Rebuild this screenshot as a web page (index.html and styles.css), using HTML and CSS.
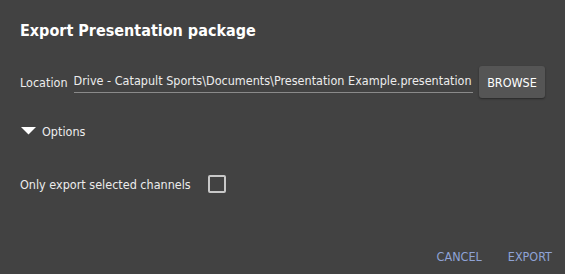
FILE: index.html
```html
<!DOCTYPE html>
<html lang="en">

<head>
    <meta charset="UTF-8">
    <meta name="viewport" content="width=device-width, initial-scale=1.0">
    <title>Export Presentation package</title>
    <link rel="stylesheet" href="styles.css">
</head>

<body>
    <div class="dialog">
        <h2 class="title">Export Presentation package</h2>

        <div class="location-row">
            <label class="field-label">Location</label>
            <div class="path-field">Drive - Catapult Sports\Documents\Presentation Example.presentation</div>
            <button class="browse-btn">BROWSE</button>
        </div>

        <div class="options-toggle">
            <svg class="caret" width="15" height="8" viewBox="0 0 15 8">
                <polygon points="0,0 15,0 7.5,7.5" fill="#ffffff" />
            </svg>
            <span>Options</span>
        </div>

        <div class="check-row">
            <span>Only export selected channels</span>
            <span class="checkbox"></span>
        </div>

        <div class="actions">
            <button class="text-btn">CANCEL</button>
            <button class="text-btn">EXPORT</button>
        </div>
    </div>
</body>

</html>
```

FILE: styles.css
```css
body {
    margin: 0;
    padding: 0;
    background-color: #424242;
    font-family: "DejaVu Sans Condensed", "DejaVu Sans", sans-serif;
    color: #ececec;
}

.dialog {
    width: 565px;
    height: 274px;
    box-sizing: border-box;
    padding: 20px 20px 0 20px;
    display: flex;
    flex-direction: column;
}

.title {
    margin: 0;
    font-size: 16px;
    font-weight: bold;
    color: #ffffff;
    line-height: 22px;
}

.location-row {
    display: flex;
    align-items: center;
    margin-top: 24px;
    height: 32px;
    font-size: 12.5px;
}

.field-label {
    margin-right: 6px;
}

.path-field {
    flex: 1;
    align-self: flex-end;
    margin-bottom: 5px;
    overflow: hidden;
    white-space: nowrap;
    height: 22px;
    line-height: 20px;
    border-bottom: 1px solid #8a8a8a;
    box-sizing: border-box;
}

.browse-btn {
    margin-left: 6px;
    background-color: #555555;
    border: none;
    border-radius: 3px;
    color: #ffffff;
    font-family: inherit;
    font-size: 12.5px;
    width: 66px;
    height: 32px;
    padding: 0;
    box-shadow: 0 1px 2px rgba(0, 0, 0, 0.4);
    cursor: pointer;
}

.options-toggle {
    display: flex;
    align-items: center;
    margin-top: 23px;
    font-size: 12.5px;
    height: 20px;
}

.caret {
    margin-left: 1px;
    margin-right: 6px;
}

.check-row {
    display: flex;
    align-items: center;
    margin-top: 33px;
    font-size: 12.5px;
    height: 20px;
}

.checkbox {
    width: 14px;
    height: 14px;
    border: 2px solid #c8c8c8;
    border-radius: 2px;
    margin-left: 17px;
}

.actions {
    margin-top: auto;
    margin-right: -8px;
    margin-bottom: 8px;
    height: 20px;
    display: flex;
    align-items: center;
    justify-content: flex-end;
    gap: 24px;
}

.text-btn {
    background: none;
    border: none;
    color: #8fa3d6;
    font-family: inherit;
    font-size: 12.5px;
    padding: 0 1px;
    cursor: pointer;
}
```
